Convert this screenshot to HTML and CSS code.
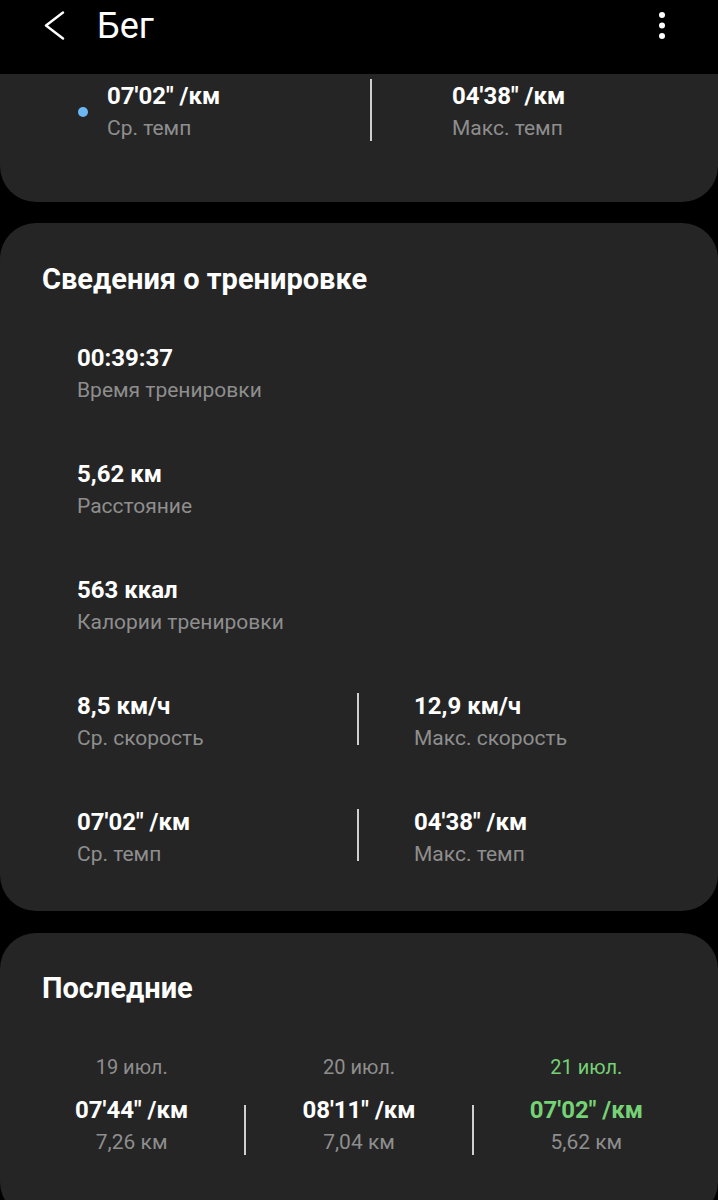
FILE: index.html
```html
<!DOCTYPE html>
<html lang="ru">
<head>
  <meta charset="UTF-8">
  <title>Бег</title>
  <link rel="stylesheet" href="styles.css">
</head>
<body>
  <header class="app-bar">
    <button class="icon-btn back-btn" aria-label="Назад">
      <svg width="30" height="30" viewBox="0 0 30 30">
        <polyline points="23,1.5 6,14.5 23,27.5" fill="none" stroke="#fff" stroke-width="2.4" stroke-linecap="round" stroke-linejoin="round"/>
      </svg>
    </button>
    <h1 class="app-title">Бег</h1>
    <button class="icon-btn more-btn" aria-label="Меню">
      <svg width="24" height="30" viewBox="0 0 24 30">
        <circle cx="12" cy="4" r="3" fill="#fff"/>
        <circle cx="12" cy="14.5" r="3" fill="#fff"/>
        <circle cx="12" cy="25" r="3" fill="#fff"/>
      </svg>
    </button>
  </header>

  <main class="content">
    <section class="card card-top">
      <div class="legend-row">
        <span class="legend-dot"></span>
        <div class="stat legend-stat">
          <div class="stat-value">07'02" /км</div>
          <div class="stat-label">Ср. темп</div>
        </div>
        <div class="sep legend-sep"></div>
        <div class="stat legend-right">
          <div class="stat-value">04'38" /км</div>
          <div class="stat-label">Макс. темп</div>
        </div>
      </div>
    </section>

    <section class="card">
      <h2 class="card-title">Сведения о тренировке</h2>
      <div class="details">
        <div class="stat">
          <div class="stat-value">00:39:37</div>
          <div class="stat-label">Время тренировки</div>
        </div>
        <div class="stat">
          <div class="stat-value">5,62 км</div>
          <div class="stat-label">Расстояние</div>
        </div>
        <div class="stat">
          <div class="stat-value">563 ккал</div>
          <div class="stat-label">Калории тренировки</div>
        </div>
        <div class="pair">
          <div class="stat pair-left">
            <div class="stat-value">8,5 км/ч</div>
            <div class="stat-label">Ср. скорость</div>
          </div>
          <div class="sep pair-sep"></div>
          <div class="stat pair-right">
            <div class="stat-value">12,9 км/ч</div>
            <div class="stat-label">Макс. скорость</div>
          </div>
        </div>
        <div class="pair">
          <div class="stat pair-left">
            <div class="stat-value">07'02" /км</div>
            <div class="stat-label">Ср. темп</div>
          </div>
          <div class="sep pair-sep"></div>
          <div class="stat pair-right">
            <div class="stat-value">04'38" /км</div>
            <div class="stat-label">Макс. темп</div>
          </div>
        </div>
      </div>
    </section>

    <section class="card card-recent">
      <h2 class="card-title">Последние</h2>
      <div class="recent-row">
        <div class="recent-col">
          <div class="recent-date">19 июл.</div>
          <div class="stat-value">07'44" /км</div>
          <div class="stat-label">7,26 км</div>
        </div>
        <div class="sep recent-sep"></div>
        <div class="recent-col">
          <div class="recent-date">20 июл.</div>
          <div class="stat-value">08'11" /км</div>
          <div class="stat-label">7,04 км</div>
        </div>
        <div class="sep recent-sep"></div>
        <div class="recent-col current">
          <div class="recent-date">21 июл.</div>
          <div class="stat-value">07'02" /км</div>
          <div class="stat-label">5,62 км</div>
        </div>
      </div>
    </section>
  </main>
</body>
</html>
```

FILE: styles.css
```css
body {
  margin: 0;
  background-color: #000;
  color: #fff;
  font-family: Roboto, "Noto Sans", sans-serif;
}

.app-bar {
  height: 74px;
  box-sizing: border-box;
  padding: 11px 44px 0 40px;
  display: flex;
  align-items: flex-start;
  background-color: #000;
}

.icon-btn {
  padding: 0;
  border: none;
  background: none;
  display: block;
  cursor: pointer;
}

.icon-btn svg {
  display: block;
}

.app-title {
  margin: 0 0 0 27px;
  font-size: 36px;
  font-weight: 400;
  line-height: 30px;
  flex: 1;
}

.card {
  background-color: #252525;
  border-radius: 36px;
  margin-top: 21px;
  padding: 36px 0 41px 42px;
}

.card-top {
  margin-top: 0;
  border-radius: 0 0 36px 36px;
  padding: 6px 0 58px 79px;
}

.card-recent {
  margin-top: 22px;
  padding: 35px 19px 60px 19px;
}

.card-title {
  margin: 0;
  font-size: 29px;
  font-weight: 700;
  line-height: 40px;
}

.card-recent .card-title {
  padding-left: 23px;
}

.stat-value {
  font-size: 24px;
  font-weight: 700;
  line-height: 32px;
}

.stat-label {
  font-size: 21px;
  line-height: 32px;
  color: #8e8e8e;
}

.sep {
  width: 2px;
  background-color: #cfcfcf;
  flex-shrink: 0;
}

/* top card: chart legend */
.legend-row {
  display: flex;
  align-items: center;
}

.legend-dot {
  width: 10px;
  height: 10px;
  border-radius: 50%;
  background-color: #6cb8f5;
  margin-right: 19px;
  margin-left: -1px;
}

.legend-stat {
  width: 263px;
}

.legend-sep {
  height: 62px;
  margin-top: -4px;
}

.legend-right {
  margin-left: 80px;
}

/* workout details */
.details {
  margin-top: 43px;
  padding-left: 35px;
  display: flex;
  flex-direction: column;
  gap: 52px;
}

.pair {
  display: flex;
  align-items: flex-start;
}

.pair-left {
  width: 280px;
}

.pair-sep {
  height: 52px;
  margin-top: 3px;
}

.pair-right {
  padding-left: 55px;
}

/* recent workouts */
.recent-row {
  margin-top: 45px;
  display: flex;
  align-items: flex-end;
}

.recent-col {
  flex: 1;
  text-align: center;
}

.recent-date {
  font-size: 20px;
  line-height: 28px;
  color: #8e8e8e;
  margin-bottom: 13px;
}

.recent-sep {
  height: 50px;
  margin-bottom: 3px;
}

.current .recent-date,
.current .stat-value {
  color: #75d275;
}
```
